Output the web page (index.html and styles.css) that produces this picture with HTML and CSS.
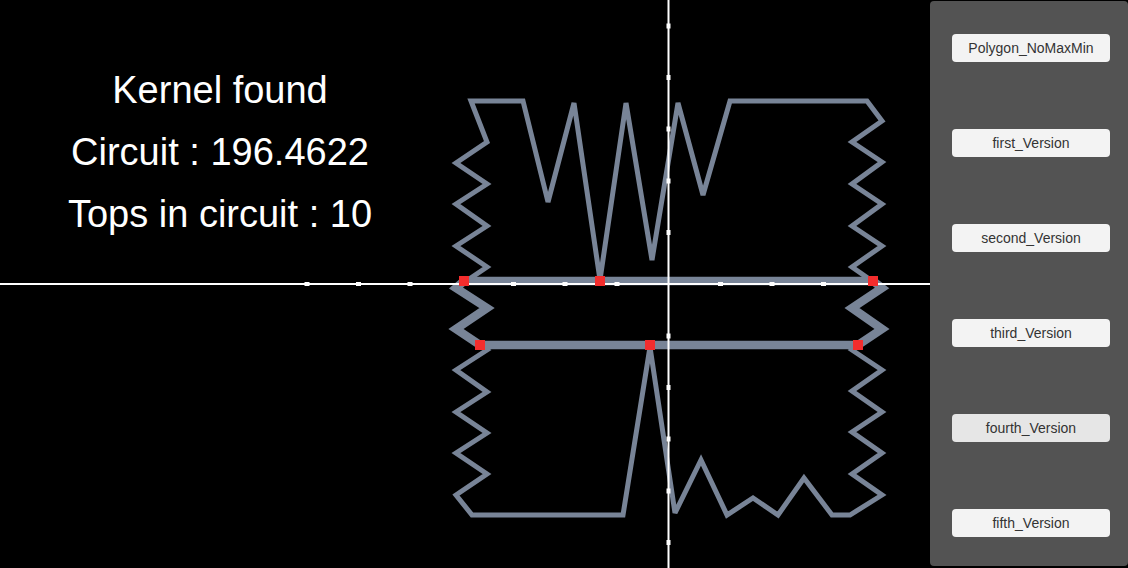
FILE: index.html
```html
<!DOCTYPE html>
<html>
<head>
    <link rel="stylesheet" href="styles.css">
    <title>Kernel</title>
</head>
<body>
    <div class="stage">
        <svg class="plot" width="930" height="568" viewBox="0 0 930 568">
            <polygon class="outline" points="471,101 523,101 548,202 574,103 600,280 626,103 652,260 678,103 703,195 730,101 867,101 882,121 852,142 882,162 852,184 882,204 852,226 882,246 852,267 882,288 852,308 882,329 852,350 882,370 852,391 882,412 852,432 882,453 852,474 882,495 850,515 832,515 804,478 778,515 753,498 727,515 701,460 675,513 650,347 623,515 472,515 456,495 487,474 456,453 487,433 456,412 487,392 456,370 487,350 456,329 487,308 456,288 487,267 456,246 487,226 456,204 487,184 456,163 487,142"/>
            <polygon class="kernel" points="464,281 600,281 873,281 882,288 852,308 882,329 858,345 650,345 480,345 456,329 487,308 456,288"/>

            <line class="axis" x1="0" y1="284" x2="930" y2="284"/>
            <line class="axis" x1="668.5" y1="0" x2="668.5" y2="568"/>

            <g class="ticks">
                <rect x="304.5" y="282" width="5" height="4"/>
                <rect x="356" y="282" width="5" height="4"/>
                <rect x="407.5" y="282" width="5" height="4"/>
                <rect x="459.5" y="282" width="5" height="4"/>
                <rect x="511" y="282" width="5" height="4"/>
                <rect x="562.5" y="282" width="5" height="4"/>
                <rect x="614.5" y="282" width="5" height="4"/>
                <rect x="718" y="282" width="5" height="4"/>
                <rect x="769.5" y="282" width="5" height="4"/>
                <rect x="821" y="282" width="5" height="4"/>
                <rect x="873" y="282" width="5" height="4"/>

                <rect x="666.5" y="23.5" width="4" height="5"/>
                <rect x="666.5" y="75" width="4" height="5"/>
                <rect x="666.5" y="126.5" width="4" height="5"/>
                <rect x="666.5" y="178.5" width="4" height="5"/>
                <rect x="666.5" y="230" width="4" height="5"/>
                <rect x="666.5" y="333.5" width="4" height="5"/>
                <rect x="666.5" y="385" width="4" height="5"/>
                <rect x="666.5" y="436.5" width="4" height="5"/>
                <rect x="666.5" y="488.5" width="4" height="5"/>
                <rect x="666.5" y="540" width="4" height="5"/>
            </g>

            <g class="tops">
                <rect x="459" y="276" width="10" height="10"/>
                <rect x="595" y="276" width="10" height="10"/>
                <rect x="868" y="276" width="10" height="10"/>
                <rect x="853" y="340" width="10" height="10"/>
                <rect x="645" y="340" width="10" height="10"/>
                <rect x="475" y="340" width="10" height="10"/>
            </g>
        </svg>

        <div class="info">
            <p>Kernel found</p>
            <p>Circuit : 196.4622</p>
            <p>Tops in circuit : 10</p>
        </div>
    </div>

    <aside class="panel">
        <button class="btn">Polygon_NoMaxMin</button>
        <button class="btn">first_Version</button>
        <button class="btn">second_Version</button>
        <button class="btn">third_Version</button>
        <button class="btn hover">fourth_Version</button>
        <button class="btn">fifth_Version</button>
    </aside>
</body>
</html>
```

FILE: styles.css
```css
* {
    box-sizing: border-box;
}

body {
    margin: 0;
    padding: 0;
    background-color: #000;
    display: flex;
    height: 568px;
    overflow: hidden;
    font-family: "Liberation Sans", Arial, sans-serif;
}

.stage {
    position: relative;
    width: 930px;
    height: 568px;
    flex: none;
}

.plot {
    display: block;
}

.outline {
    fill: none;
    stroke: #788497;
    stroke-width: 5;
    stroke-linejoin: miter;
    stroke-miterlimit: 3;
}

.kernel {
    fill: none;
    stroke: #788497;
    stroke-width: 8.5;
    stroke-linejoin: miter;
    stroke-miterlimit: 3;
}

.axis {
    stroke: #fff;
    stroke-width: 2;
}

.ticks rect {
    fill: #fff;
}

.tops rect {
    fill: #f32d2d;
}

/* text over the plot */
.info {
    position: absolute;
    top: 59px;
    left: 0;
    width: 440px;
    text-align: center;
    color: #fff;
    font-size: 38px;
    line-height: 62px;
}

.info p {
    margin: 0;
}

.panel {
    flex: 1;
    margin: 1px 0 2px 0;
    background-color: #535353;
    border-radius: 4px;
    display: flex;
    flex-direction: column;
    gap: 67px;
    padding: 33px 0 0 22px;
}

.btn {
    width: 158px;
    height: 28px;
    border: none;
    border-radius: 4px;
    background-color: #f3f3f3;
    color: #333;
    font-family: "Liberation Sans", Arial, sans-serif;
    font-size: 14px;
    padding: 0;
}

.btn.hover {
    background-color: #e6e6e6;
}
```
